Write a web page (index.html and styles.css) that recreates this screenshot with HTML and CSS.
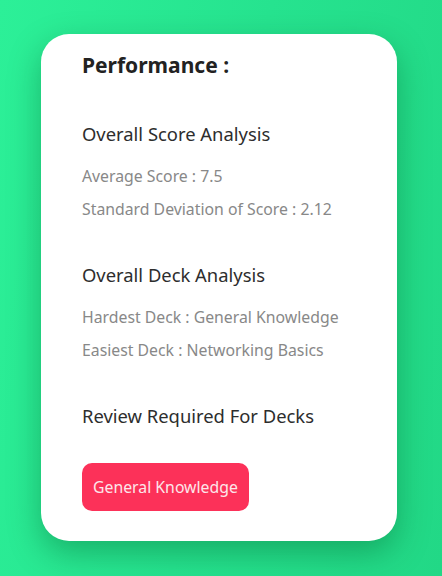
FILE: index.html
```html
<!DOCTYPE html>
<html>
<head>
<meta charset="utf-8">
<link rel="stylesheet" href="styles.css">
</head>
<body>
<div class="card">
  <h1 class="title">Performance :</h1>
  <section class="section">
    <h2 class="heading">Overall Score Analysis</h2>
    <p class="stat">Average Score : 7.5</p>
    <p class="stat">Standard Deviation of Score : 2.12</p>
  </section>
  <section class="section">
    <h2 class="heading">Overall Deck Analysis</h2>
    <p class="stat">Hardest Deck : General Knowledge</p>
    <p class="stat">Easiest Deck : Networking Basics</p>
  </section>
  <section class="section">
    <h2 class="heading">Review Required For Decks</h2>
  </section>
  <div class="tags">
    <button class="tag">General Knowledge</button>
  </div>
</div>
</body>
</html>
```
FILE: styles.css
```css
html, body {
  margin: 0;
  height: 100%;
}
body {
  background: linear-gradient(100deg, #2cf098 0%, #26e38f 50%, #22d886 100%);
  font-family: "Segoe UI", "Noto Sans", sans-serif;
  padding: 34px 0 0 41px;
  box-sizing: border-box;
  overflow: hidden;
}
.card {
  width: 356px;
  height: 507px;
  box-sizing: border-box;
  background: #fff;
  border-radius: 28px;
  padding: 16px 41px 31px;
  box-shadow: 0 12px 32px rgba(0, 90, 40, 0.38);
}
.title {
  margin: 0;
  font-size: 21px;
  line-height: 30px;
  font-weight: 700;
  color: #222;
}
.section {
  margin-top: 40px;
}
.section + .section {
  margin-top: 35px;
}
.heading {
  margin: 0 0 12px;
  font-size: 18.4px;
  line-height: 28px;
  font-weight: 400;
  color: #2d2d2d;
}
.stat {
  margin: 0;
  font-size: 15.8px;
  line-height: 33px;
  color: #888;
}
.tags {
  margin-top: 33px;
}
.tag {
  height: 48px;
  padding: 0 11px;
  border: none;
  border-radius: 10px;
  background: #fc3159;
  color: #fde6ea;
  font-family: inherit;
  font-size: 15.8px;
}
```
